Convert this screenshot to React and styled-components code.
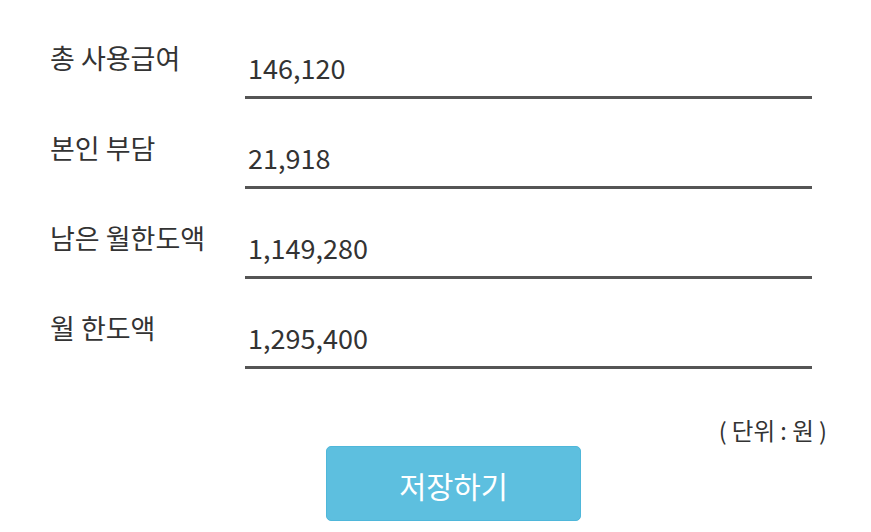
import React from "react";
import styled, { createGlobalStyle } from "styled-components";

const GlobalStyle = createGlobalStyle`
  body {
    margin: 0;
    background: #fff;
    font-family: "Noto Sans CJK KR", "Noto Sans", sans-serif;
  }
`;

const Page = styled.div`
  padding: 9px 0 0 50px;
  color: #333;
`;

const Row = styled.div`
  display: flex;
  height: 90px;
`;

const Label = styled.div`
  width: 195px;
  padding-top: 35px;
  font-size: 27px;
  line-height: 1;
  color: #333;
`;

const Field = styled.div`
  width: 567px;
  box-sizing: border-box;
  height: 90px;
  padding: 45px 0 0 3px;
  border-bottom: 3px solid #555;
  font-size: 27px;
  line-height: 1;
  color: #333;
`;

const Unit = styled.div`
  width: 777px;
  margin-top: 50px;
  text-align: right;
  font-size: 23.5px;
  line-height: 1;
  color: #333;
`;

const SaveButton = styled.button`
  display: flex;
  align-items: center;
  justify-content: center;
  margin: 3px 0 0 276px;
  width: 255px;
  height: 75px;
  box-sizing: border-box;
  background: #5dbfdf;
  border: 1px solid #4fb7da;
  border-radius: 5px;
  color: #fff;
  font-family: "Noto Sans CJK KR", "Noto Sans", sans-serif;
  font-size: 29.5px;
  padding: 4px 0 0;
  cursor: pointer;
`;

const rows = [
  { label: "총 사용급여", value: "146,120" },
  { label: "본인 부담", value: "21,918" },
  { label: "남은 월한도액", value: "1,149,280" },
  { label: "월 한도액", value: "1,295,400" },
];

export default function App() {
  return (
    <>
      <GlobalStyle />
      <Page>
        {rows.map((r) => (
          <Row key={r.label}>
            <Label>{r.label}</Label>
            <Field>{r.value}</Field>
          </Row>
        ))}
        <Unit>( 단위 : 원 )</Unit>
        <SaveButton>저장하기</SaveButton>
      </Page>
    </>
  );
}
